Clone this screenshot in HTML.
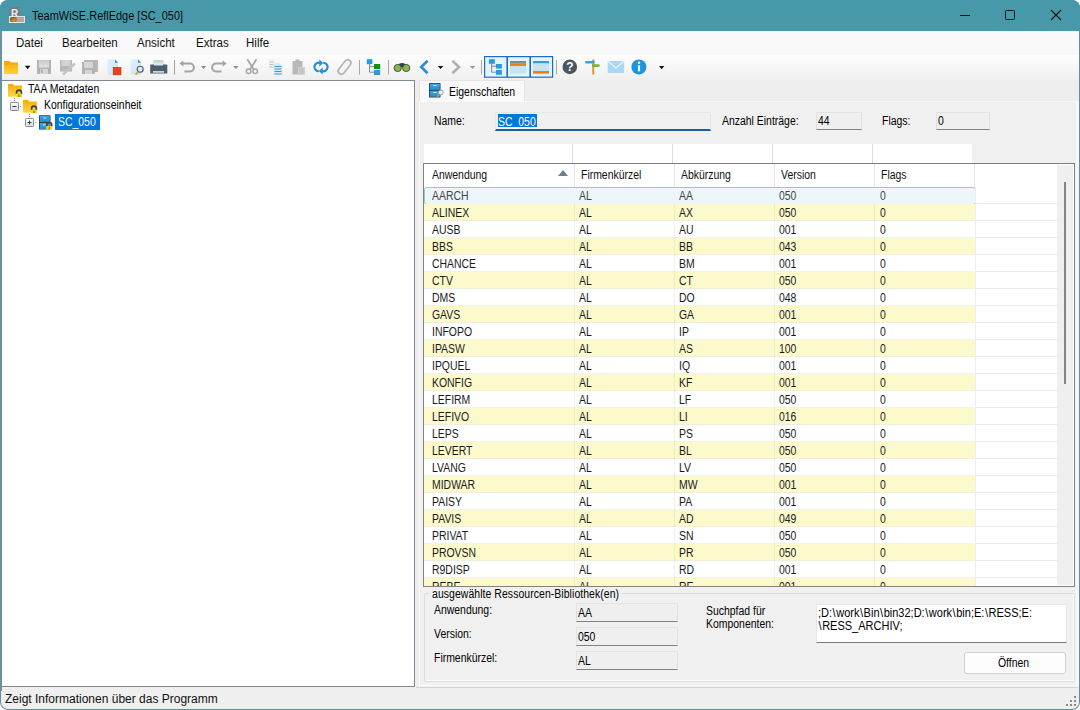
<!DOCTYPE html>
<html><head><meta charset="utf-8">
<style>
*{margin:0;padding:0;box-sizing:border-box}
html,body{width:1080px;height:710px;overflow:hidden;background:#ffffff}
body{font-family:"Liberation Sans",sans-serif;position:relative;color:#000}
.a{position:absolute}
.ms{font-size:12px;white-space:nowrap;color:#000;transform:scaleX(0.87);transform-origin:0 0}
.seg{font-size:11.5px;white-space:nowrap;color:#111}
#win{left:0;top:0;width:1080px;height:710px;background:#628f9b;border-radius:8px;overflow:hidden}
#menu{left:1px;top:31px;width:1078px;height:24px;background:#f9f9f9}
#tool{left:1px;top:55px;width:1078px;height:27px;background:linear-gradient(#fdfdfd,#eeeeee)}
#mainbg{left:1px;top:82px;width:1078px;height:605px;background:#eeeeee}
#status{left:1px;top:687px;width:1078px;height:22px;background:#efefef;border-radius:0 0 7px 7px}
#tree{left:1px;top:80px;width:414px;height:607px;background:#fff;border-top:1px solid #828790;border-right:1px solid #828790;border-bottom:1px solid #828790}
.cell{height:17px;line-height:17px;font-size:12px;white-space:nowrap;transform:scaleX(0.87);transform-origin:0 0}
.selrow{background:#edf7fa;border:1px solid #94c6d6;border-radius:3px}
.hdr{font-size:12px;white-space:nowrap;color:#111;transform:scaleX(0.87);transform-origin:0 0}
.tsep{width:1px;height:16px;background:#c8c8c8;top:60px}
.dd{width:0;height:0;border-left:3px solid transparent;border-right:3px solid transparent;border-top:3px solid #111;top:66px}
.ro{background:#efefef;border:1px solid #e2e2e2;border-bottom:1px solid #828282}
</style></head><body>
<div id="win" class="a">
  <div class="a" style="left:0;top:0;width:1080px;height:31px;background:#4799aa"></div>
  <!-- title -->
  <div class="a" style="left:9px;top:7px;width:11px;height:11px;background:#6f7f86"></div>
  <div class="a" style="left:11px;top:8px;font-size:10px;color:#eee;font-weight:bold">R</div>
  <div class="a" style="left:9px;top:16px;width:16px;height:7px;background:#b8a89a;border:1px solid #dfe8ea"></div>
  <div class="a" style="left:10px;top:17px;width:7px;height:5px;background:#c98632;border-radius:2.5px;box-shadow:inset 1px 1px 2px #8a5520"></div>
  <div class="a seg" style="left:32px;top:9px;font-size:12px;color:#0a0a0a;transform:scaleX(0.913);transform-origin:0 0">TeamWiSE.ReflEdge [SC_050]</div>
  <!-- window controls -->
  <div class="a" style="left:960px;top:15px;width:10px;height:1px;background:#111"></div>
  <div class="a" style="left:1005px;top:10px;width:10px;height:10px;border:1px solid #111;border-radius:1.5px"></div>
  <svg class="a" style="left:1050px;top:9px" width="12" height="12" viewBox="0 0 12 12"><path d="M1 1L11 11M11 1L1 11" stroke="#111" stroke-width="1.1"/></svg>

  <div id="menu" class="a"></div>
  <div class="a seg" style="left:16px;top:36px;font-size:12px;transform:scaleX(0.96);transform-origin:0 0">Datei</div>
  <div class="a seg" style="left:62px;top:36px;font-size:12px;transform:scaleX(0.96);transform-origin:0 0">Bearbeiten</div>
  <div class="a seg" style="left:137px;top:36px;font-size:12px;transform:scaleX(0.96);transform-origin:0 0">Ansicht</div>
  <div class="a seg" style="left:196px;top:36px;font-size:12px;transform:scaleX(0.96);transform-origin:0 0">Extras</div>
  <div class="a seg" style="left:246px;top:36px;font-size:12px;transform:scaleX(0.96);transform-origin:0 0">Hilfe</div>
  <div id="tool" class="a"></div>
  <svg class="a" style="left:0;top:55px" width="680" height="25" viewBox="0 55 680 25">
<defs>
<linearGradient id="fold" x1="0" y1="0" x2="0" y2="1"><stop offset="0" stop-color="#f5a300"/><stop offset="0.35" stop-color="#fbb81a"/><stop offset="1" stop-color="#fdd13a"/></linearGradient>
<linearGradient id="gsave" x1="0" y1="0" x2="0" y2="1"><stop offset="0" stop-color="#c9c9c9"/><stop offset="1" stop-color="#e2e2e2"/></linearGradient>
<linearGradient id="pg" x1="0" y1="0" x2="1" y2="1"><stop offset="0" stop-color="#e4f1fb"/><stop offset="1" stop-color="#c5e2f6"/></linearGradient>
</defs>
<!-- folder -->
<path d="M4 61 h5.5 l1.5 1.5 h7 v11.5 h-14 z" fill="url(#fold)"/>
<path d="M4 64 h14" stroke="#f2a000" stroke-width="0.8" opacity="0.6"/>
<polygon points="24.8,65.8 30.4,65.8 27.6,69.2" fill="#111"/>
<!-- save -->
<rect x="37" y="60" width="14" height="14" fill="#b3b3b3"/>
<rect x="39" y="60" width="10" height="7.5" fill="url(#gsave)"/>
<rect x="40" y="69" width="8" height="5" fill="#d6d6d6"/>
<rect x="41" y="69.5" width="1.6" height="3.5" fill="#a8a8a8"/>
<!-- save edit -->
<rect x="60" y="60" width="12" height="11.5" fill="#b8b8b8"/>
<rect x="61.5" y="60" width="9" height="6" fill="#d4d4d4"/>
<path d="M63 74.5 L75 63.5" stroke="#c4c4c4" stroke-width="2.4"/>
<!-- save all -->
<rect x="84" y="60" width="14" height="12" fill="#b8b8b8"/>
<rect x="82" y="62" width="13" height="12" fill="#b3b3b3"/>
<rect x="84" y="62" width="9" height="6" fill="#d6d6d6"/>
<rect x="85" y="70" width="7" height="4" fill="#d4d4d4"/>
<!-- doc red -->
<path d="M107.5 59.3 h7.5 l3 3.5 v12 h-10.5 z" fill="url(#pg)"/>
<path d="M115 59.3 l3 3.5 h-3 z" fill="#3b8cc4"/>
<rect x="113.2" y="67.3" width="7.8" height="7.5" fill="#e8431c" stroke="#b83412" stroke-width="0.6"/>
<!-- doc magnify -->
<path d="M130.5 59.3 h7.5 l3 3.5 v12 h-10.5 z" fill="url(#pg)"/>
<path d="M138 59.3 l3 3.5 h-3 z" fill="#3b8cc4"/>
<circle cx="140.2" cy="69.2" r="3" fill="#d9eefb" stroke="#4a5a66" stroke-width="1.1"/>
<path d="M138.3 71.8 L135.5 74.6" stroke="#d4a520" stroke-width="1.8"/>
<!-- printer -->
<rect x="153.5" y="60" width="10" height="5" fill="#c7d2da"/>
<path d="M151 64.5 h15.5 a0.8 0.8 0 0 1 0.8 0.8 v8.2 h-17.1 v-8.2 a0.8 0.8 0 0 1 0.8 -0.8z" fill="#4d5f6b"/>
<rect x="154" y="62.5" width="9" height="3" fill="#d8e6ee"/>
<rect x="153" y="71.2" width="11" height="1.4" fill="#f2f2f2"/>
<!-- sep -->
<rect x="174" y="60" width="1" height="14.5" fill="#a0a0a0"/>
<!-- undo -->
<path d="M181.5 63.6 h8.5 a3.9 3.9 0 0 1 0 7.8 h-5.5" fill="none" stroke="#a3a3a3" stroke-width="2"/>
<polygon points="179.3,63.6 183.3,60.6 183.3,66.6" fill="#a3a3a3"/>
<polygon points="201,66 206.2,66 203.6,69" fill="#8c8c8c"/>
<!-- redo -->
<path d="M224.5 63.6 h-8.5 a3.9 3.9 0 0 0 0 7.8 h5.5" fill="none" stroke="#a3a3a3" stroke-width="2"/>
<polygon points="226.7,63.6 222.7,60.6 222.7,66.6" fill="#a3a3a3"/>
<polygon points="233.2,66 238.4,66 235.8,69" fill="#8c8c8c"/>
<!-- scissors -->
<path d="M247.2 59.3 L253.5 69 M256.5 59.3 L250.2 69" stroke="#a6a6a6" stroke-width="1.7"/>
<circle cx="248.6" cy="71.3" r="2.3" fill="none" stroke="#a6a6a6" stroke-width="1.5"/>
<circle cx="255.2" cy="71.3" r="2.3" fill="none" stroke="#a6a6a6" stroke-width="1.5"/>
<!-- copy -->
<path d="M268.5 59 h5 l2 2 v9 h-7 z" fill="#eef4f8"/>
<path d="M269.5 62h4M269.5 64.5h4M269.5 67h4" stroke="#b0b8c0" stroke-width="0.9"/>
<path d="M273.5 63 h6 l3 3 v9 h-9 z" fill="#d7ecf9"/>
<path d="M274.5 66.5h7M274.5 69h7M274.5 71.5h7M274.5 74h7" stroke="#3e93cf" stroke-width="1"/>
<!-- paste -->
<path d="M292.5 61 h3 v-1.5 h4 v1.5 h3 v13.5 h-10 z" fill="#b8b8b8"/>
<rect x="298" y="67" width="7" height="7.5" fill="#cfcfcf"/>
<path d="M299 69h5M299 71h5M299 73h5" stroke="#b5b5b5" stroke-width="0.8"/>
<!-- refresh -->
<path d="M320.3 63 A4.3 4.3 0 1 0 318.8 71.3" fill="none" stroke="#2590d6" stroke-width="2.1"/>
<polygon points="319.3,59.6 323.3,63.1 319.3,66.6" fill="#2590d6"/>
<path d="M321.7 71 A4.3 4.3 0 1 0 323.2 62.7" fill="none" stroke="#2590d6" stroke-width="2.1"/>
<polygon points="322.7,67.4 318.7,70.9 322.7,74.4" fill="#2590d6"/>
<!-- link -->
<rect x="336.3" y="63.8" width="16.5" height="6.4" rx="3.2" transform="rotate(-52 344.5 67)" fill="none" stroke="#b4b4b4" stroke-width="1.7"/>
<!-- sep -->
<rect x="359" y="60" width="1" height="14.5" fill="#a8a8a8"/>
<!-- tree icon -->
<path d="M369.5 63.5 V72.2 H374 M369.5 66.6 H374" fill="none" stroke="#8a8a8a" stroke-width="1"/>
<rect x="366.8" y="59.2" width="5.6" height="5" fill="#2a9ae0"/>
<rect x="374" y="64" width="6.2" height="5" fill="#119111"/>
<rect x="374" y="70" width="6.2" height="5" fill="#2a9ae0"/>
<!-- sep -->
<rect x="388" y="60" width="1" height="14.5" fill="#a8a8a8"/>
<!-- binoculars -->
<path d="M397 67 L399.5 63.6 Q402 62.6 404.5 63.6 L407 67 Z" fill="#2f3f4c"/>
<circle cx="397.7" cy="68" r="3.6" fill="#86b94c" stroke="#38492f" stroke-width="0.9"/>
<circle cx="406.2" cy="68" r="3.6" fill="#86b94c" stroke="#38492f" stroke-width="0.9"/>
<!-- back -->
<path d="M427.6 60.8 L421.2 67 L427.6 73.2" fill="none" stroke="#2b8ed8" stroke-width="2.7"/>
<polygon points="437.8,65.9 443.4,65.9 440.6,69" fill="#111"/>
<!-- forward -->
<path d="M452.5 60.8 L459 67 L452.5 73.2" fill="none" stroke="#b0b0b0" stroke-width="2.6"/>
<polygon points="469.8,65.9 475.3,65.9 472.55,69" fill="#999"/>
<rect x="481" y="60" width="1" height="14.5" fill="#a8a8a8"/>
<!-- button group -->
<rect x="484.6" y="56.6" width="68" height="20.6" fill="#e4f4fc" stroke="#1d6cc0" stroke-width="1.2"/>
<rect x="506.4" y="56.6" width="1.6" height="20.6" fill="#1d6cc0"/>
<rect x="529.4" y="56.6" width="1.6" height="20.6" fill="#1d6cc0"/>
<path d="M491.6 63.6 V72.2 H496 M491.6 66.2 H496" fill="none" stroke="#8a8a8a" stroke-width="1"/>
<rect x="488.9" y="59.2" width="5.9" height="4.6" fill="#2a9ae0"/>
<rect x="495.9" y="64" width="6" height="4.6" fill="#2a9ae0"/>
<rect x="495.9" y="70" width="6" height="4.8" fill="#2a9ae0"/>
<rect x="510" y="61" width="16" height="12.6" fill="#c4e3f6"/>
<rect x="510" y="61" width="16" height="2.3" fill="#6f8f9a"/>
<rect x="510" y="63.3" width="16" height="2.6" fill="#f07d10"/>
<rect x="533" y="61" width="16" height="12.6" fill="#c4e3f6"/>
<rect x="533" y="61" width="16" height="2.2" fill="#3d9ad6"/>
<rect x="533" y="71" width="16" height="2.6" fill="#f07d10"/>
<rect x="556" y="60" width="1" height="14.5" fill="#a8a8a8"/>
<!-- help -->
<circle cx="569.8" cy="66.9" r="7.3" fill="#4b5761"/>
<text x="569.8" y="71.3" font-family="Liberation Sans" font-weight="bold" font-size="12" fill="#fff" text-anchor="middle">?</text>
<!-- signpost -->
<rect x="592.3" y="59.5" width="1.9" height="15" fill="#ee8a26"/>
<path d="M585.6 61 h9 v2.5 h-9 l-0.5 -1.25 z" fill="#3aa3dc"/>
<path d="M592 64.3 h7 l0.9 1.3 l-0.9 1.3 h-7 z" fill="#74b834"/>
<!-- envelope -->
<rect x="607.7" y="61" width="16.4" height="11.9" fill="#a9d7f4"/>
<path d="M607.7 61 L615.9 68 L624.1 61" fill="none" stroke="#e6f4fc" stroke-width="1.2"/>
<!-- info -->
<circle cx="638.9" cy="66.9" r="7.5" fill="#1d93e2"/>
<rect x="637.9" y="65.3" width="2.2" height="6" fill="#fff"/>
<circle cx="639" cy="62.7" r="1.25" fill="#fff"/>
<polygon points="659,66 664.3,66 661.65,69.2" fill="#111"/>
</svg>

  <div id="mainbg" class="a"></div>

  <!-- tree -->
  <div id="tree" class="a"></div>
  <svg class="a" style="left:0;top:80px" width="110" height="52" viewBox="0 80 110 52">
<defs>
<linearGradient id="tfold" x1="0" y1="0" x2="0" y2="1"><stop offset="0" stop-color="#f7a800"/><stop offset="0.4" stop-color="#fbbd20"/><stop offset="1" stop-color="#fdd548"/></linearGradient>
<linearGradient id="box" x1="0" y1="0" x2="0" y2="1"><stop offset="0" stop-color="#ffffff"/><stop offset="1" stop-color="#dcdcdc"/></linearGradient>
<linearGradient id="srv" x1="0" y1="0" x2="0" y2="1"><stop offset="0" stop-color="#39a9ec"/><stop offset="1" stop-color="#1b8bd6"/></linearGradient>
</defs>
<!-- folder 1 -->
<path d="M8 84 h5 l1.3 1.6 h7.6 v11.1 h-13.9 z" fill="url(#tfold)"/>
<g transform="translate(0 0)">
<path d="M16.6 94.2 V92.6 a2.4 2.4 0 0 1 4.8 0 V94.2" fill="none" stroke="#34464a" stroke-width="1.7"/>
<rect x="16" y="93.7" width="6" height="3.6" fill="#f0d82a"/>
<rect x="18.4" y="94.4" width="1.2" height="2.6" fill="#8a7a10"/>
</g>
<!-- dotted -->
<rect x="14" y="98" width="1" height="1" fill="#777"/><rect x="14" y="100" width="1" height="1" fill="#777"/>
<!-- minus box -->
<rect x="10.5" y="102.5" width="8" height="8" rx="0.8" fill="url(#box)" stroke="#8b8b8b" stroke-width="1"/>
<path d="M12.5 106.5 h4" stroke="#30405a" stroke-width="1.1"/>
<rect x="20.2" y="106" width="1" height="1" fill="#888"/>
<!-- folder 2 -->
<path d="M23 100 h5 l1.3 1.6 h7.6 v11.1 h-13.9 z" fill="url(#tfold)"/>
<g transform="translate(15 16)">
<path d="M16.6 94.2 V92.6 a2.4 2.4 0 0 1 4.8 0 V94.2" fill="none" stroke="#34464a" stroke-width="1.7"/>
<rect x="16" y="93.7" width="6" height="3.6" fill="#f0d82a"/>
<rect x="18.4" y="94.4" width="1.2" height="2.6" fill="#8a7a10"/>
</g>
<rect x="29" y="114" width="1" height="1" fill="#777"/><rect x="29" y="116" width="1" height="1" fill="#777"/>
<!-- plus box -->
<rect x="25.5" y="118.5" width="8" height="8" rx="0.8" fill="url(#box)" stroke="#8b8b8b" stroke-width="1"/>
<path d="M27.5 122.5 h4 M29.5 120.5 v4" stroke="#30405a" stroke-width="1.1"/>
<rect x="35.2" y="122" width="1" height="1" fill="#888"/>
<!-- server -->
<rect x="39" y="115.3" width="11.5" height="14.3" rx="0.6" fill="#2b3d4a"/>
<rect x="39.8" y="116" width="10" height="6" fill="url(#srv)"/>
<rect x="39.8" y="123" width="10" height="6" fill="url(#srv)"/>
<rect x="43.5" y="117.6" width="2.5" height="0.9" fill="#e8f6ff"/>
<rect x="43" y="124.5" width="2.5" height="0.9" fill="#e8f6ff"/>
<g transform="translate(30.3 32.3)">
<path d="M16.6 94.2 V92.6 a2.4 2.4 0 0 1 4.8 0 V94.2" fill="none" stroke="#34464a" stroke-width="1.7"/>
<rect x="16" y="93.7" width="6" height="3.6" fill="#f0d82a"/>
<rect x="18.4" y="94.4" width="1.2" height="2.6" fill="#8a7a10"/>
</g>
</svg>
<div class="a ms" style="left:28px;top:82px">TAA Metadaten</div>
<div class="a ms" style="left:44px;top:98px">Konfigurationseinheit</div>
<div class="a" style="left:55px;top:114px;width:45px;height:16px;background:#0078d7"></div>
<div class="a ms" style="left:58px;top:115px;color:#fff">SC_050</div>


  <!-- tab -->
  <div class="a" style="left:419px;top:80px;width:106px;height:22px;background:#f8f8f8;border:1px solid #e4e4e4;border-bottom:none"></div>
  <svg class="a" style="left:426px;top:81px" width="20" height="19" viewBox="426 81 20 19">
<defs>
<linearGradient id="srv2" x1="0" y1="0" x2="0" y2="1"><stop offset="0" stop-color="#39a9ec"/><stop offset="1" stop-color="#1b8bd6"/></linearGradient>
</defs>
<rect x="429" y="83" width="11.5" height="14.5" rx="0.6" fill="#2b3d4a"/>
<rect x="429.8" y="83.7" width="10" height="6.2" fill="url(#srv2)"/>
<rect x="429.8" y="90.8" width="10" height="6" fill="url(#srv2)"/>
<rect x="433.2" y="85.1" width="3.4" height="1" fill="#bff0ff"/>
<rect x="433.2" y="92" width="3.4" height="1" fill="#bff0ff"/>
<circle cx="440.8" cy="92.5" r="2.4" fill="#e4f1f8" stroke="#7a909c" stroke-width="0.8"/>
<path d="M439 94.5 L437 97" stroke="#c9a03a" stroke-width="1.4"/>
</svg>

  <div class="a ms" style="left:449px;top:85px">Eigenschaften</div>
  <!-- page -->
  <div class="a" style="left:419px;top:101px;width:659px;height:587px;background:#f0f0f0;border:1px solid #fafafa;border-bottom:1px solid #d0d0d0;border-right:1px solid #f4f8fa"></div>
  <div class="a" style="left:1076px;top:101px;width:3px;height:586px;background:#f6f9fb"></div>
  <div class="a" style="left:420px;top:685px;width:656px;height:1px;background:#fbfbfb"></div>

  <div class="a ms" style="left:434px;top:114px">Name:</div>
  <div class="a" style="left:495px;top:112px;width:216px;height:19px;background:#f0f0f0;border:1px solid #e6e6e6;border-bottom:2px solid #1b5f9c"></div>
  <div class="a" style="left:498px;top:114px;width:39px;height:13px;background:#0078d7"></div>
  <div class="a ms" style="left:498px;top:115px;color:#fff">SC_050</div>

  <div class="a ms" style="left:722px;top:114px">Anzahl Einträge:</div>
  <div class="a ro" style="left:816px;top:112px;width:46px;height:18px"></div>
  <div class="a ms" style="left:818px;top:114px">44</div>
  <div class="a ms" style="left:882px;top:114px">Flags:</div>
  <div class="a ro" style="left:936px;top:112px;width:54px;height:18px"></div>
  <div class="a ms" style="left:938px;top:114px">0</div>

  <!-- filter row -->
  <div class="a" style="left:424px;top:144px;width:548px;height:19px;background:#fff"></div>
  <div class="a" style="left:572px;top:144px;width:1px;height:19px;background:#dcdcdc"></div>
  <div class="a" style="left:672px;top:144px;width:1px;height:19px;background:#dcdcdc"></div>
  <div class="a" style="left:772px;top:144px;width:1px;height:19px;background:#dcdcdc"></div>
  <div class="a" style="left:872px;top:144px;width:1px;height:19px;background:#dcdcdc"></div>

  <!-- grid -->
  <div class="a" style="left:423px;top:163px;width:652px;height:424px;background:#fff;border:1px solid #828282;border-top:1px solid #7c7c7c;overflow:hidden">
    <div class="a" style="left:0;top:0;width:633px;height:23px;background:#fff"></div>
    <div class="a" style="left:150px;top:0;width:1px;height:23px;background:#e5e5e5"></div>
    <div class="a" style="left:250px;top:0;width:1px;height:23px;background:#e5e5e5"></div>
    <div class="a" style="left:350px;top:0;width:1px;height:23px;background:#e5e5e5"></div>
    <div class="a" style="left:450px;top:0;width:1px;height:23px;background:#e5e5e5"></div>
    <div class="a" style="left:550px;top:0;width:1px;height:23px;background:#e5e5e5"></div>
    <div class="a hdr" style="left:8px;top:4px">Anwendung</div>
    <div class="a" style="left:133.5px;top:5.5px;width:0;height:0;border-left:5.5px solid transparent;border-right:5.5px solid transparent;border-bottom:6px solid #6f7d8a"></div>
    <div class="a hdr" style="left:157px;top:4px">Firmenkürzel</div>
    <div class="a hdr" style="left:257px;top:4px">Abkürzung</div>
    <div class="a hdr" style="left:357px;top:4px">Version</div>
    <div class="a hdr" style="left:457px;top:4px">Flags</div>
    <div class="a selrow" style="left:0px;top:23px;width:552px;height:18px"></div>
<div class="a" style="left:551px;top:39px;width:82px;height:1px;background:#ececec"></div>
<div class="a cell" style="left:8px;top:24px;color:#444">AARCH</div>
<div class="a cell" style="left:155px;top:24px;color:#444">AL</div>
<div class="a cell" style="left:255px;top:24px;color:#444">AA</div>
<div class="a cell" style="left:355px;top:24px;color:#444">050</div>
<div class="a cell" style="left:455.5px;top:24px;color:#444">0</div>
<div class="a" style="left:0px;top:40px;width:551px;height:17px;background:#fcfacb"></div>
<div class="a" style="left:551px;top:56px;width:82px;height:1px;background:#ececec"></div>
<div class="a" style="left:0px;top:56px;width:551px;height:1px;background:#f0eedc"></div>
<div class="a cell" style="left:8px;top:41px;color:#1a1a1a">ALINEX</div>
<div class="a cell" style="left:155px;top:41px;color:#1a1a1a">AL</div>
<div class="a cell" style="left:255px;top:41px;color:#1a1a1a">AX</div>
<div class="a cell" style="left:355px;top:41px;color:#1a1a1a">050</div>
<div class="a cell" style="left:455.5px;top:41px;color:#1a1a1a">0</div>
<div class="a" style="left:0px;top:57px;width:551px;height:17px;background:transparent"></div>
<div class="a" style="left:551px;top:73px;width:82px;height:1px;background:#ececec"></div>
<div class="a" style="left:0px;top:73px;width:551px;height:1px;background:#f2f2f2"></div>
<div class="a cell" style="left:8px;top:58px;color:#1a1a1a">AUSB</div>
<div class="a cell" style="left:155px;top:58px;color:#1a1a1a">AL</div>
<div class="a cell" style="left:255px;top:58px;color:#1a1a1a">AU</div>
<div class="a cell" style="left:355px;top:58px;color:#1a1a1a">001</div>
<div class="a cell" style="left:455.5px;top:58px;color:#1a1a1a">0</div>
<div class="a" style="left:0px;top:74px;width:551px;height:17px;background:#fcfacb"></div>
<div class="a" style="left:551px;top:90px;width:82px;height:1px;background:#ececec"></div>
<div class="a" style="left:0px;top:90px;width:551px;height:1px;background:#f0eedc"></div>
<div class="a cell" style="left:8px;top:75px;color:#1a1a1a">BBS</div>
<div class="a cell" style="left:155px;top:75px;color:#1a1a1a">AL</div>
<div class="a cell" style="left:255px;top:75px;color:#1a1a1a">BB</div>
<div class="a cell" style="left:355px;top:75px;color:#1a1a1a">043</div>
<div class="a cell" style="left:455.5px;top:75px;color:#1a1a1a">0</div>
<div class="a" style="left:0px;top:91px;width:551px;height:17px;background:transparent"></div>
<div class="a" style="left:551px;top:107px;width:82px;height:1px;background:#ececec"></div>
<div class="a" style="left:0px;top:107px;width:551px;height:1px;background:#f2f2f2"></div>
<div class="a cell" style="left:8px;top:92px;color:#1a1a1a">CHANCE</div>
<div class="a cell" style="left:155px;top:92px;color:#1a1a1a">AL</div>
<div class="a cell" style="left:255px;top:92px;color:#1a1a1a">BM</div>
<div class="a cell" style="left:355px;top:92px;color:#1a1a1a">001</div>
<div class="a cell" style="left:455.5px;top:92px;color:#1a1a1a">0</div>
<div class="a" style="left:0px;top:108px;width:551px;height:17px;background:#fcfacb"></div>
<div class="a" style="left:551px;top:124px;width:82px;height:1px;background:#ececec"></div>
<div class="a" style="left:0px;top:124px;width:551px;height:1px;background:#f0eedc"></div>
<div class="a cell" style="left:8px;top:109px;color:#1a1a1a">CTV</div>
<div class="a cell" style="left:155px;top:109px;color:#1a1a1a">AL</div>
<div class="a cell" style="left:255px;top:109px;color:#1a1a1a">CT</div>
<div class="a cell" style="left:355px;top:109px;color:#1a1a1a">050</div>
<div class="a cell" style="left:455.5px;top:109px;color:#1a1a1a">0</div>
<div class="a" style="left:0px;top:125px;width:551px;height:17px;background:transparent"></div>
<div class="a" style="left:551px;top:141px;width:82px;height:1px;background:#ececec"></div>
<div class="a" style="left:0px;top:141px;width:551px;height:1px;background:#f2f2f2"></div>
<div class="a cell" style="left:8px;top:126px;color:#1a1a1a">DMS</div>
<div class="a cell" style="left:155px;top:126px;color:#1a1a1a">AL</div>
<div class="a cell" style="left:255px;top:126px;color:#1a1a1a">DO</div>
<div class="a cell" style="left:355px;top:126px;color:#1a1a1a">048</div>
<div class="a cell" style="left:455.5px;top:126px;color:#1a1a1a">0</div>
<div class="a" style="left:0px;top:142px;width:551px;height:17px;background:#fcfacb"></div>
<div class="a" style="left:551px;top:158px;width:82px;height:1px;background:#ececec"></div>
<div class="a" style="left:0px;top:158px;width:551px;height:1px;background:#f0eedc"></div>
<div class="a cell" style="left:8px;top:143px;color:#1a1a1a">GAVS</div>
<div class="a cell" style="left:155px;top:143px;color:#1a1a1a">AL</div>
<div class="a cell" style="left:255px;top:143px;color:#1a1a1a">GA</div>
<div class="a cell" style="left:355px;top:143px;color:#1a1a1a">001</div>
<div class="a cell" style="left:455.5px;top:143px;color:#1a1a1a">0</div>
<div class="a" style="left:0px;top:159px;width:551px;height:17px;background:transparent"></div>
<div class="a" style="left:551px;top:175px;width:82px;height:1px;background:#ececec"></div>
<div class="a" style="left:0px;top:175px;width:551px;height:1px;background:#f2f2f2"></div>
<div class="a cell" style="left:8px;top:160px;color:#1a1a1a">INFOPO</div>
<div class="a cell" style="left:155px;top:160px;color:#1a1a1a">AL</div>
<div class="a cell" style="left:255px;top:160px;color:#1a1a1a">IP</div>
<div class="a cell" style="left:355px;top:160px;color:#1a1a1a">001</div>
<div class="a cell" style="left:455.5px;top:160px;color:#1a1a1a">0</div>
<div class="a" style="left:0px;top:176px;width:551px;height:17px;background:#fcfacb"></div>
<div class="a" style="left:551px;top:192px;width:82px;height:1px;background:#ececec"></div>
<div class="a" style="left:0px;top:192px;width:551px;height:1px;background:#f0eedc"></div>
<div class="a cell" style="left:8px;top:177px;color:#1a1a1a">IPASW</div>
<div class="a cell" style="left:155px;top:177px;color:#1a1a1a">AL</div>
<div class="a cell" style="left:255px;top:177px;color:#1a1a1a">AS</div>
<div class="a cell" style="left:355px;top:177px;color:#1a1a1a">100</div>
<div class="a cell" style="left:455.5px;top:177px;color:#1a1a1a">0</div>
<div class="a" style="left:0px;top:193px;width:551px;height:17px;background:transparent"></div>
<div class="a" style="left:551px;top:209px;width:82px;height:1px;background:#ececec"></div>
<div class="a" style="left:0px;top:209px;width:551px;height:1px;background:#f2f2f2"></div>
<div class="a cell" style="left:8px;top:194px;color:#1a1a1a">IPQUEL</div>
<div class="a cell" style="left:155px;top:194px;color:#1a1a1a">AL</div>
<div class="a cell" style="left:255px;top:194px;color:#1a1a1a">IQ</div>
<div class="a cell" style="left:355px;top:194px;color:#1a1a1a">001</div>
<div class="a cell" style="left:455.5px;top:194px;color:#1a1a1a">0</div>
<div class="a" style="left:0px;top:210px;width:551px;height:17px;background:#fcfacb"></div>
<div class="a" style="left:551px;top:226px;width:82px;height:1px;background:#ececec"></div>
<div class="a" style="left:0px;top:226px;width:551px;height:1px;background:#f0eedc"></div>
<div class="a cell" style="left:8px;top:211px;color:#1a1a1a">KONFIG</div>
<div class="a cell" style="left:155px;top:211px;color:#1a1a1a">AL</div>
<div class="a cell" style="left:255px;top:211px;color:#1a1a1a">KF</div>
<div class="a cell" style="left:355px;top:211px;color:#1a1a1a">001</div>
<div class="a cell" style="left:455.5px;top:211px;color:#1a1a1a">0</div>
<div class="a" style="left:0px;top:227px;width:551px;height:17px;background:transparent"></div>
<div class="a" style="left:551px;top:243px;width:82px;height:1px;background:#ececec"></div>
<div class="a" style="left:0px;top:243px;width:551px;height:1px;background:#f2f2f2"></div>
<div class="a cell" style="left:8px;top:228px;color:#1a1a1a">LEFIRM</div>
<div class="a cell" style="left:155px;top:228px;color:#1a1a1a">AL</div>
<div class="a cell" style="left:255px;top:228px;color:#1a1a1a">LF</div>
<div class="a cell" style="left:355px;top:228px;color:#1a1a1a">050</div>
<div class="a cell" style="left:455.5px;top:228px;color:#1a1a1a">0</div>
<div class="a" style="left:0px;top:244px;width:551px;height:17px;background:#fcfacb"></div>
<div class="a" style="left:551px;top:260px;width:82px;height:1px;background:#ececec"></div>
<div class="a" style="left:0px;top:260px;width:551px;height:1px;background:#f0eedc"></div>
<div class="a cell" style="left:8px;top:245px;color:#1a1a1a">LEFIVO</div>
<div class="a cell" style="left:155px;top:245px;color:#1a1a1a">AL</div>
<div class="a cell" style="left:255px;top:245px;color:#1a1a1a">LI</div>
<div class="a cell" style="left:355px;top:245px;color:#1a1a1a">016</div>
<div class="a cell" style="left:455.5px;top:245px;color:#1a1a1a">0</div>
<div class="a" style="left:0px;top:261px;width:551px;height:17px;background:transparent"></div>
<div class="a" style="left:551px;top:277px;width:82px;height:1px;background:#ececec"></div>
<div class="a" style="left:0px;top:277px;width:551px;height:1px;background:#f2f2f2"></div>
<div class="a cell" style="left:8px;top:262px;color:#1a1a1a">LEPS</div>
<div class="a cell" style="left:155px;top:262px;color:#1a1a1a">AL</div>
<div class="a cell" style="left:255px;top:262px;color:#1a1a1a">PS</div>
<div class="a cell" style="left:355px;top:262px;color:#1a1a1a">050</div>
<div class="a cell" style="left:455.5px;top:262px;color:#1a1a1a">0</div>
<div class="a" style="left:0px;top:278px;width:551px;height:17px;background:#fcfacb"></div>
<div class="a" style="left:551px;top:294px;width:82px;height:1px;background:#ececec"></div>
<div class="a" style="left:0px;top:294px;width:551px;height:1px;background:#f0eedc"></div>
<div class="a cell" style="left:8px;top:279px;color:#1a1a1a">LEVERT</div>
<div class="a cell" style="left:155px;top:279px;color:#1a1a1a">AL</div>
<div class="a cell" style="left:255px;top:279px;color:#1a1a1a">BL</div>
<div class="a cell" style="left:355px;top:279px;color:#1a1a1a">050</div>
<div class="a cell" style="left:455.5px;top:279px;color:#1a1a1a">0</div>
<div class="a" style="left:0px;top:295px;width:551px;height:17px;background:transparent"></div>
<div class="a" style="left:551px;top:311px;width:82px;height:1px;background:#ececec"></div>
<div class="a" style="left:0px;top:311px;width:551px;height:1px;background:#f2f2f2"></div>
<div class="a cell" style="left:8px;top:296px;color:#1a1a1a">LVANG</div>
<div class="a cell" style="left:155px;top:296px;color:#1a1a1a">AL</div>
<div class="a cell" style="left:255px;top:296px;color:#1a1a1a">LV</div>
<div class="a cell" style="left:355px;top:296px;color:#1a1a1a">050</div>
<div class="a cell" style="left:455.5px;top:296px;color:#1a1a1a">0</div>
<div class="a" style="left:0px;top:312px;width:551px;height:17px;background:#fcfacb"></div>
<div class="a" style="left:551px;top:328px;width:82px;height:1px;background:#ececec"></div>
<div class="a" style="left:0px;top:328px;width:551px;height:1px;background:#f0eedc"></div>
<div class="a cell" style="left:8px;top:313px;color:#1a1a1a">MIDWAR</div>
<div class="a cell" style="left:155px;top:313px;color:#1a1a1a">AL</div>
<div class="a cell" style="left:255px;top:313px;color:#1a1a1a">MW</div>
<div class="a cell" style="left:355px;top:313px;color:#1a1a1a">001</div>
<div class="a cell" style="left:455.5px;top:313px;color:#1a1a1a">0</div>
<div class="a" style="left:0px;top:329px;width:551px;height:17px;background:transparent"></div>
<div class="a" style="left:551px;top:345px;width:82px;height:1px;background:#ececec"></div>
<div class="a" style="left:0px;top:345px;width:551px;height:1px;background:#f2f2f2"></div>
<div class="a cell" style="left:8px;top:330px;color:#1a1a1a">PAISY</div>
<div class="a cell" style="left:155px;top:330px;color:#1a1a1a">AL</div>
<div class="a cell" style="left:255px;top:330px;color:#1a1a1a">PA</div>
<div class="a cell" style="left:355px;top:330px;color:#1a1a1a">001</div>
<div class="a cell" style="left:455.5px;top:330px;color:#1a1a1a">0</div>
<div class="a" style="left:0px;top:346px;width:551px;height:17px;background:#fcfacb"></div>
<div class="a" style="left:551px;top:362px;width:82px;height:1px;background:#ececec"></div>
<div class="a" style="left:0px;top:362px;width:551px;height:1px;background:#f0eedc"></div>
<div class="a cell" style="left:8px;top:347px;color:#1a1a1a">PAVIS</div>
<div class="a cell" style="left:155px;top:347px;color:#1a1a1a">AL</div>
<div class="a cell" style="left:255px;top:347px;color:#1a1a1a">AD</div>
<div class="a cell" style="left:355px;top:347px;color:#1a1a1a">049</div>
<div class="a cell" style="left:455.5px;top:347px;color:#1a1a1a">0</div>
<div class="a" style="left:0px;top:363px;width:551px;height:17px;background:transparent"></div>
<div class="a" style="left:551px;top:379px;width:82px;height:1px;background:#ececec"></div>
<div class="a" style="left:0px;top:379px;width:551px;height:1px;background:#f2f2f2"></div>
<div class="a cell" style="left:8px;top:364px;color:#1a1a1a">PRIVAT</div>
<div class="a cell" style="left:155px;top:364px;color:#1a1a1a">AL</div>
<div class="a cell" style="left:255px;top:364px;color:#1a1a1a">SN</div>
<div class="a cell" style="left:355px;top:364px;color:#1a1a1a">050</div>
<div class="a cell" style="left:455.5px;top:364px;color:#1a1a1a">0</div>
<div class="a" style="left:0px;top:380px;width:551px;height:17px;background:#fcfacb"></div>
<div class="a" style="left:551px;top:396px;width:82px;height:1px;background:#ececec"></div>
<div class="a" style="left:0px;top:396px;width:551px;height:1px;background:#f0eedc"></div>
<div class="a cell" style="left:8px;top:381px;color:#1a1a1a">PROVSN</div>
<div class="a cell" style="left:155px;top:381px;color:#1a1a1a">AL</div>
<div class="a cell" style="left:255px;top:381px;color:#1a1a1a">PR</div>
<div class="a cell" style="left:355px;top:381px;color:#1a1a1a">050</div>
<div class="a cell" style="left:455.5px;top:381px;color:#1a1a1a">0</div>
<div class="a" style="left:0px;top:397px;width:551px;height:17px;background:transparent"></div>
<div class="a" style="left:551px;top:413px;width:82px;height:1px;background:#ececec"></div>
<div class="a" style="left:0px;top:413px;width:551px;height:1px;background:#f2f2f2"></div>
<div class="a cell" style="left:8px;top:398px;color:#1a1a1a">R9DISP</div>
<div class="a cell" style="left:155px;top:398px;color:#1a1a1a">AL</div>
<div class="a cell" style="left:255px;top:398px;color:#1a1a1a">RD</div>
<div class="a cell" style="left:355px;top:398px;color:#1a1a1a">001</div>
<div class="a cell" style="left:455.5px;top:398px;color:#1a1a1a">0</div>
<div class="a" style="left:0px;top:414px;width:551px;height:17px;background:#fcfacb"></div>
<div class="a" style="left:551px;top:430px;width:82px;height:1px;background:#ececec"></div>
<div class="a" style="left:0px;top:430px;width:551px;height:1px;background:#f0eedc"></div>
<div class="a cell" style="left:8px;top:415px;color:#1a1a1a">REBE</div>
<div class="a cell" style="left:155px;top:415px;color:#1a1a1a">AL</div>
<div class="a cell" style="left:255px;top:415px;color:#1a1a1a">RE</div>
<div class="a cell" style="left:355px;top:415px;color:#1a1a1a">001</div>
<div class="a cell" style="left:455.5px;top:415px;color:#1a1a1a">0</div>
<div class="a" style="left:551px;top:23px;width:1px;height:400px;background:#eeeeee"></div>
<div class="a" style="left:150px;top:40px;width:1px;height:400px;background:rgba(0,0,0,0.05)"></div>
<div class="a" style="left:250px;top:40px;width:1px;height:400px;background:rgba(0,0,0,0.05)"></div>
<div class="a" style="left:350px;top:40px;width:1px;height:400px;background:rgba(0,0,0,0.05)"></div>
<div class="a" style="left:450px;top:40px;width:1px;height:400px;background:rgba(0,0,0,0.05)"></div>
    <!-- scrollbar -->
    <div class="a" style="left:633px;top:1px;width:16px;height:420px;background:#efefef"></div>
    <div class="a" style="left:640px;top:18px;width:2px;height:202px;background:#858585"></div>
  </div>

  <!-- group box -->
  <div class="a" style="left:424px;top:593px;width:651px;height:89px;border:1px solid #dcdcdc;border-radius:2px"></div>
  <div class="a" style="left:425px;top:594px;width:649px;height:87px;border:1px solid #fcfcfc;border-top:none;border-left:none"></div>
  <div class="a" style="left:429px;top:587px;width:192px;height:12px;background:#f0f0f0"></div>
  <div class="a ms" style="left:432px;top:587px;letter-spacing:0.08px">ausgewählte Ressourcen-Bibliothek(en)</div>
  <div class="a ms" style="left:434px;top:603px">Anwendung:</div>
  <div class="a ms" style="left:434px;top:627px">Version:</div>
  <div class="a ms" style="left:434px;top:651px">Firmenkürzel:</div>
  <div class="a ro" style="left:576px;top:603px;width:102px;height:19px"></div>
  <div class="a ms" style="left:578px;top:606px">AA</div>
  <div class="a ro" style="left:576px;top:627px;width:102px;height:19px"></div>
  <div class="a ms" style="left:578px;top:630px">050</div>
  <div class="a ro" style="left:576px;top:651px;width:102px;height:19px"></div>
  <div class="a ms" style="left:578px;top:654px">AL</div>
  <div class="a ms" style="left:706px;top:605px;line-height:13px">Suchpfad für<br>Komponenten:</div>
  <div class="a" style="left:816px;top:604px;width:251px;height:39px;background:#fff;border:1px solid #e8e8e8;border-bottom:1px solid #7a7a7a"></div>
  <div class="a ms" style="left:818px;top:607px;line-height:13px;transform:scaleX(0.917)">;D:<span style="margin:0 0.6px">\</span>work<span style="margin:0 0.6px">\</span>Bin<span style="margin:0 0.6px">\</span>bin32;D:<span style="margin:0 0.6px">\</span>work<span style="margin:0 0.6px">\</span>bin;E:<span style="margin:0 0.6px">\</span>RESS;E:<br><span style="margin:0 0.6px">\</span>RESS_ARCHIV;</div>
  <div class="a" style="left:964px;top:652px;width:102px;height:22px;background:#fdfdfd;border:1px solid #d0d0d0;border-radius:3px"></div>
  <div class="a ms" style="left:998px;top:656px">Öffnen</div>

  <div id="status" class="a"></div>
  <div class="a" style="left:416px;top:687px;width:662px;height:1px;background:#d4d4d4"></div>
  <div class="a" style="left:1074px;top:696px;width:2px;height:2px;background:#8a8a8a"></div>
  <div class="a" style="left:1070px;top:700px;width:2px;height:2px;background:#8a8a8a"></div>
  <div class="a" style="left:1074px;top:700px;width:2px;height:2px;background:#8a8a8a"></div>
  <div class="a" style="left:1066px;top:704px;width:2px;height:2px;background:#8a8a8a"></div>
  <div class="a" style="left:1070px;top:704px;width:2px;height:2px;background:#8a8a8a"></div>
  <div class="a" style="left:1074px;top:704px;width:2px;height:2px;background:#8a8a8a"></div>
  <div class="a seg" style="left:5px;top:692px;font-size:12px">Zeigt Informationen über das Programm</div>
  <div class="a" style="left:0;top:31px;width:2px;height:660px;background:#6a919e"></div>
</div>
</body></html>
